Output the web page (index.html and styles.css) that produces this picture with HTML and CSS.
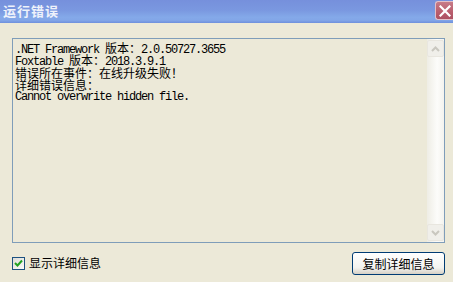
FILE: index.html
```html
<!DOCTYPE html>
<html>
<head>
<meta charset="utf-8">
<link rel="stylesheet" href="styles.css">
</head>
<body>
<div class="dialog">
  <div class="titlebar">
    <span class="title">运行错误</span>
    <span class="close">
      <svg width="12" height="12" viewBox="0 0 12 12"><path d="M1.5 1.5 L10.5 10.5 M10.5 1.5 L1.5 10.5" stroke="#fff" stroke-width="2.2" stroke-linecap="square"/></svg>
    </span>
  </div>
  <div class="body">
    <div class="textbox">
      <div class="text">
        <div class="line">.NET Framework <span class="cj">版本：</span>2.0.50727.3655</div>
        <div class="line">Foxtable <span class="cj">版本：</span>2018.3.9.1</div>
        <div class="line"><span class="cj">错误所在事件：在线升级失败！</span></div>
        <div class="line"><span class="cj">详细错误信息：</span></div>
        <div class="line">Cannot overwrite hidden file.</div>
      </div>
      <div class="scrollbar">
        <div class="sbtn">
          <svg width="9" height="6" viewBox="0 0 9 6"><path d="M1 5 L4.5 1.5 L8 5" fill="none" stroke="#c9c7bf" stroke-width="2"/></svg>
        </div>
        <div class="track"></div>
        <div class="sbtn">
          <svg width="9" height="6" viewBox="0 0 9 6"><path d="M1 1 L4.5 4.5 L8 1" fill="none" stroke="#c9c7bf" stroke-width="2"/></svg>
        </div>
      </div>
    </div>
    <div class="footer">
      <label class="check">
        <span class="box">
          <svg width="11" height="11" viewBox="0 0 11 11"><path d="M2 5 L4.5 7.5 L9 2.5" fill="none" stroke="#21a121" stroke-width="2"/></svg>
        </span>
        <span class="cj label">显示详细信息</span>
      </label>
      <button class="btn"><span class="cj">复制详细信息</span></button>
    </div>
  </div>
</div>
</body>
</html>
```

FILE: styles.css
```css
html, body {
  margin: 0;
  padding: 0;
}
body {
  width: 453px;
  height: 282px;
  background: #ece9d8;
  overflow: hidden;
  font-family: "Noto Sans CJK SC", sans-serif;
}
.dialog {
  display: flex;
  flex-direction: column;
  height: 282px;
}
.titlebar {
  height: 23px;
  display: flex;
  justify-content: space-between;
  align-items: flex-start;
  background: linear-gradient(#7690dc 0%, #7a98e0 45%, #84a9e9 75%, #82a6e8 88%, #6e8fdc 100%);
}
.title {
  font-family: "Noto Sans CJK SC", sans-serif;
  font-weight: bold;
  font-size: 13px;
  letter-spacing: 1px;
  color: #eef2fb;
  line-height: 20px;
  margin-left: 3px;
  margin-top: 1px;
}
.close {
  width: 18px;
  height: 19px;
  margin-top: 1px;
  box-sizing: border-box;
  border: 1px solid #e3c0c8;
  border-right: none;
  border-radius: 3px 0 0 3px;
  background: linear-gradient(#c77b88, #b95d6d 60%, #ad5163);
  display: flex;
  align-items: center;
  justify-content: center;
}
.body {
  flex: 1;
  display: flex;
  flex-direction: column;
  padding: 15px 8px 0 12px;
}
.textbox {
  height: 205px;
  box-sizing: border-box;
  border: 1px solid #7f9db9;
  display: flex;
  background: #ece9d8;
}
.text {
  flex: 1;
  padding: 3px 0 0 2px;
  font-family: "Liberation Mono", "Noto Sans CJK SC", monospace;
  font-size: 12px;
  letter-spacing: -1.2px;
  color: #000;
}
.line {
  height: 12.25px;
  line-height: 12px;
  white-space: pre;
}
.cj {
  font-family: "Noto Sans CJK SC", sans-serif;
  letter-spacing: 0;
}
.scrollbar {
  width: 17px;
  display: flex;
  flex-direction: column;
  background: linear-gradient(90deg, #eeede5, #fcfcfa 60%, #f4f3ee);
}
.track {
  flex: 1;
}
.sbtn {
  width: 17px;
  height: 17px;
  box-sizing: border-box;
  border: 1px solid #e8e6df;
  border-radius: 2px;
  background: #f0efea;
  display: flex;
  align-items: center;
  justify-content: center;
  margin: 1px 0;
}
.footer {
  flex: 1;
  display: flex;
  justify-content: space-between;
  align-items: center;
  padding-top: 1px;
}
.check {
  display: flex;
  align-items: center;
  gap: 4px;
}
.box {
  width: 13px;
  height: 13px;
  box-sizing: border-box;
  border: 1px solid #1c5180;
  background: linear-gradient(135deg, #dcdcd7, #fbfbf9);
  display: flex;
  align-items: center;
  justify-content: center;
}
.label {
  font-size: 12px;
  color: #000;
  line-height: 14px;
}
.btn {
  width: 93px;
  height: 23px;
  margin-right: 0;
  box-sizing: border-box;
  border: 1px solid #003c74;
  border-radius: 3px;
  background: linear-gradient(#ffffff, #f3f3ef 70%, #d6d0c5);
  font-size: 12px;
  color: #000;
  padding: 0;
  display: flex;
  align-items: center;
  justify-content: center;
}
```
